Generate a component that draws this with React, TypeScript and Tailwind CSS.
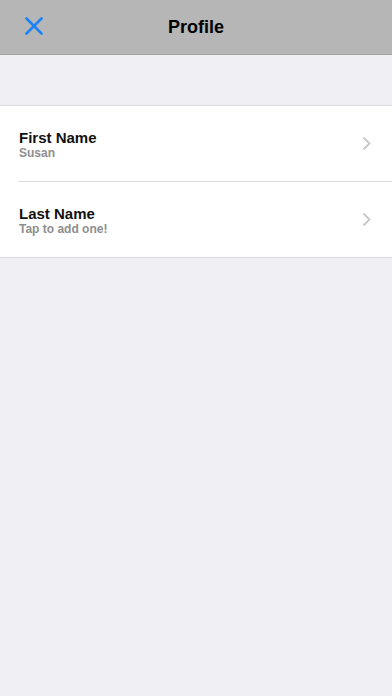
import React from 'react';

const rows = [
  { label: 'First Name', value: 'Susan' },
  { label: 'Last Name', value: 'Tap to add one!' },
];

function Chevron() {
  return (
    <svg width="9" height="15" viewBox="0 0 9 15" fill="none">
      <path d="M1.5 1.5L7.5 7.5L1.5 13.5" stroke="#c7c7cc" strokeWidth="1.8" />
    </svg>
  );
}

export default function App() {
  return (
    <div
      className="w-[392px] h-[696px] bg-[#efeff4] flex flex-col"
      style={{ fontFamily: '"Liberation Sans", Arial, sans-serif' }}
    >
      {/* Nav bar */}
      <div className="relative h-[55px] bg-[#b6b6b6] border-b border-[#a3a3a3] flex items-center justify-center">
        <button className="absolute left-[24px] top-[16px] w-[19px] h-[19px] flex items-center justify-center">
          <svg width="18" height="18" viewBox="0 0 18 18" fill="none">
            <path d="M1.5 1.5L16.5 16.5M16.5 1.5L1.5 16.5" stroke="#1b82f8" strokeWidth="2.6" strokeLinecap="round" />
          </svg>
        </button>
        <h1 className="text-[18px] font-bold text-black leading-none -mt-[1px]">Profile</h1>
      </div>

      {/* List */}
      <div className="mt-[50px] bg-white border-y border-[#dcdce0]">
        {rows.map((row, i) => (
          <div key={row.label}>
            {i > 0 && <div className="ml-[18px] h-px bg-[#dcdce0]" />}
            <div className="h-[75px] flex items-center pl-[19px] pr-[21px]">
              <div className="flex-1 flex flex-col pt-[2px]">
                <span className="text-[15px] font-bold text-[#111] leading-[18px]">{row.label}</span>
                <span className="text-[12px] font-bold text-[#8e8e8e] leading-[14px] -mt-[1px]">{row.value}</span>
              </div>
              <Chevron />
            </div>
          </div>
        ))}
      </div>
    </div>
  );
}
